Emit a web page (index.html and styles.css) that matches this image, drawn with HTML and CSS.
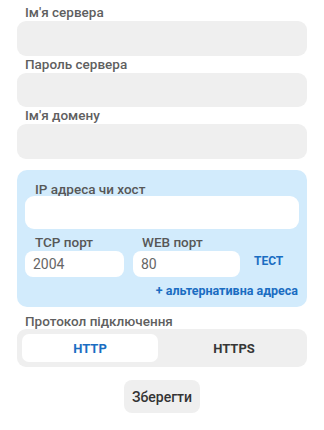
FILE: index.html
```html
<!DOCTYPE html>
<html lang="uk">
<head>
<meta charset="utf-8">
<link rel="stylesheet" href="styles.css">
</head>
<body>
<div class="page">
  <div class="field">
    <div class="label">Ім'я сервера</div>
    <div class="input"></div>
  </div>
  <div class="field">
    <div class="label">Пароль сервера</div>
    <div class="input"></div>
  </div>
  <div class="field">
    <div class="label">Ім'я домену</div>
    <div class="input"></div>
  </div>

  <div class="card">
    <div class="label card-label ip-label">IP адреса чи хост</div>
    <div class="input white tall"></div>
    <div class="ports">
      <div class="port tcp">
        <div class="label card-label">TCP порт</div>
        <div class="input white small">2004</div>
      </div>
      <div class="port web">
        <div class="label card-label">WEB порт</div>
        <div class="input white small">80</div>
      </div>
      <div class="test">ТЕСТ</div>
    </div>
    <div class="alt">+ альтернативна адреса</div>
  </div>

  <div class="label proto-label">Протокол підключення</div>
  <div class="segment">
    <div class="seg active">HTTP</div>
    <div class="seg">HTTPS</div>
  </div>

  <div class="save-row">
    <div class="save">Зберегти</div>
  </div>
</div>
</body>
</html>
```

FILE: styles.css
```css
html, body {
  margin: 0;
  padding: 0;
  background: #ffffff;
}
body {
  font-family: Roboto, "Noto Sans", "Liberation Sans", sans-serif;
  width: 324px;
  height: 430px;
  overflow: hidden;
}
.page {
  padding: 4px 17px 0 17px;
  display: flex;
  flex-direction: column;
}
.field {
  display: flex;
  flex-direction: column;
}
.label {
  font-size: 13.5px;
  font-weight: 500;
  color: #5f5f5f;
  line-height: 17px;
  padding-left: 8px;
}
.input {
  height: 34.5px;
  background: #efefef;
  border-radius: 9px;
  box-sizing: border-box;
}
.card {
  margin-top: 11.5px;
  background: #d2ebfc;
  border-radius: 10px;
  padding: 12px 8px 8px 8px;
  display: flex;
  flex-direction: column;
}
.card-label {
  padding-left: 10px;
  color: #575757;
}
.ip-label {
  line-height: 14px;
}
.input.white {
  background: #ffffff;
}
.input.tall {
  height: 33px;
}
.ports {
  display: flex;
  align-items: flex-end;
  margin-top: 5px;
}
.port {
  display: flex;
  flex-direction: column;
}
.tcp { width: 99px; }
.web { width: 107px; margin-left: 9px; }
.web .card-label { padding-left: 9px; }
.input.small {
  height: 26px;
  font-size: 14px;
  color: #666666;
  font-weight: 400;
  line-height: 26px;
  padding-left: 8px;
  border-radius: 8px;
}
.test {
  margin-left: 14px;
  margin-bottom: 8px;
  font-size: 12px;
  font-weight: 700;
  color: #1a6dc2;
  line-height: 16px;
}
.alt {
  align-self: flex-end;
  margin-top: 6px;
  margin-right: 1px;
  font-size: 12.5px;
  font-weight: 700;
  color: #1a6dc2;
  line-height: 16px;
}
.proto-label {
  margin-top: 6px;
  line-height: 16px;
}
.segment {
  height: 38px;
  background: #efefef;
  border-radius: 9px;
  padding: 5px;
  box-sizing: border-box;
  display: flex;
  gap: 8px;
}
.seg {
  flex: 1;
  display: flex;
  align-items: center;
  justify-content: center;
  font-size: 13px;
  font-weight: 700;
  color: #363636;
  border-radius: 7px;
}
.seg.active {
  background: #ffffff;
  color: #1a6dc2;
}
.save-row {
  display: flex;
  justify-content: center;
  margin-top: 13px;
}
.save {
  width: 76px;
  height: 33px;
  background: #efefef;
  border-radius: 8px;
  display: flex;
  align-items: center;
  justify-content: center;
  font-size: 14px;
  font-weight: 500;
  color: #333333;
}
```
